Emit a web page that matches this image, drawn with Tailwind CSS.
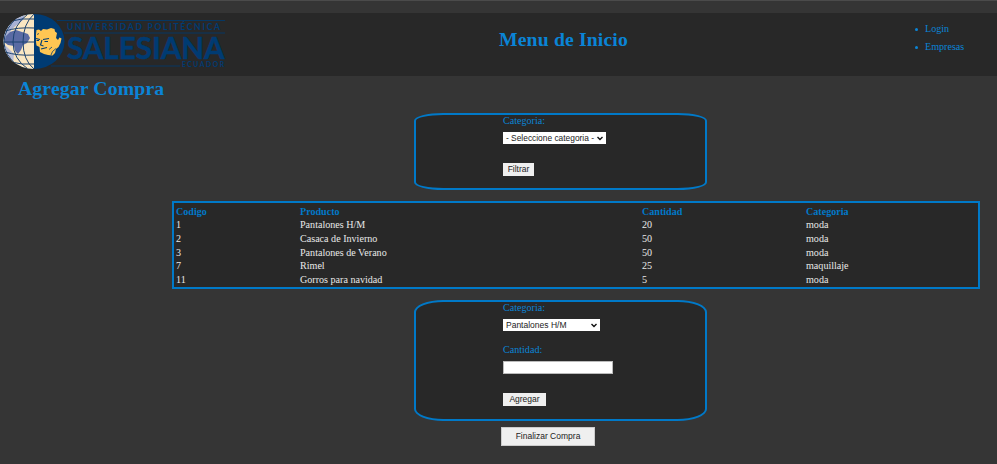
<!DOCTYPE html>
<html lang="es">
<head>
<meta charset="utf-8">
<title>Agregar Compra</title>
<script src="https://cdn.jsdelivr.net/npm/@tailwindcss/browser@4"></script>
</head>
<body class="w-[997px] h-[464px] overflow-hidden bg-[#353535] border-t border-[#4b4b4b] font-['Liberation_Serif',serif] text-[10.1px] leading-[14px] text-[#0a84d6]">
<header class="mt-[12px] h-[63px] bg-[#282828] flex items-start">
  <svg class="w-[230px] h-[63px] shrink-0" viewBox="0 13 230 63" aria-label="Universidad Politécnica Salesiana">
    <defs><clipPath id="globe"><path d="M34 14A30.500 27.500 0 0 0 34 69Z"/></clipPath></defs>
    <ellipse cx="34" cy="41.500" rx="30.500" ry="27.500" fill="#003b73"/>
    <g clip-path="url(#globe)">
      <rect x="3" y="13" width="31" height="57" fill="#fae6c2"/>
      <path d="M3 32L10 20L18 16L25 14L23 20L18 24L12 29L7 37L3 42Z" fill="#a9b2d5"/>
      <path d="M4 44L9 49L14 54L13 64L6 57Z" fill="#b9bdd7"/>
      <path d="M6 36L10 32L16 30L22 32L28 34L30 38L27 43L23 45L21 50L18 54L15 51L14 46L8 45L4 42Z" fill="#5a6ba4"/>
      <g fill="none" stroke="#1d426f" stroke-width="1">
        <path d="M3 42H34M5 31Q18 27 34 28M12 21Q21 18 34 19M5 52Q18 56 34 55M11 62Q22 65 34 64"/>
        <path d="M34 14Q23 24 23 42T34 69M28 14Q13 25 13 42T28 69M18 17Q4 29 4 42T18 66"/>
      </g>
    </g>
    <path d="M36 34L36.500 30L39 29.500L41 31L43 29L47 29.500L51 28L54.500 29L55 31.500L57 33L56 38L58 40L59.500 37.500L61.500 38.500L60.500 43L58.500 47L56 49L55 53L52.500 55.500L48 55L44 54L40 52L39.500 47L36.500 45.500L36 42Z" fill="#ffc653"/>
    <g fill="none" stroke="#003b73" stroke-width="1.100">
      <path d="M36 38.500L40 39.500M36.500 40.500H39M43 39.500L49 38.500M44.500 41.500H48M42 40L40.500 45L43.500 46M41 49L47 47.500"/>
      <path d="M49 49.500L52 47M51 55L52.500 51.500L56 48.500M37 34.500L39 33.500" stroke-width=".8"/>
    </g>
    <g stroke="#063762" stroke-width="1.200"><path d="M57 20.500H225M64 33H225M51 66H180"/></g>
    <g fill="#003b73" font-family="Lato, sans-serif" font-weight="700">
      <text x="67" y="30.300" font-size="8.600" textLength="153">UNIVERSIDAD POLITÉCNICA</text>
      <text x="67" y="59.300" font-size="30.500" textLength="157.500" lengthAdjust="spacingAndGlyphs" stroke="#003b73" stroke-width=".5">SALESIANA</text>
      <text x="182" y="67.200" font-size="6.800" textLength="42">ECUADOR</text>
    </g>
  </svg>
  <h1 class="ml-[269px] mt-[13px] w-[140px] whitespace-nowrap text-[19.7px] leading-[27px] font-bold tracking-[0.15px]">Menu de Inicio</h1>
  <nav class="ml-auto w-[82px] pt-[7px]">
    <ul class="leading-[18px]">
      <li class="flex items-center gap-[7px]"><span class="size-[3px] rounded-full bg-[#0a84d6]"></span>Login</li>
      <li class="flex items-center gap-[7px]"><span class="size-[3px] rounded-full bg-[#0a84d6]"></span>Empresas</li>
    </ul>
  </nav>
</header>
<h2 class="pl-[18px] h-[37px] text-[19.7px] leading-[24px] font-bold tracking-[0.15px]">Agregar Compra</h2>
<main>
  <form class="ml-[414px] w-[293px] h-[77px] bg-[#282828] border-2 border-[#0079c8] rounded-[10%] pl-[87px] flex flex-col items-start">
    <label class="mt-[-1px] h-[18px]">Categoria:</label>
    <div class="w-[103px] h-[12px] bg-white text-[#222] font-['Liberation_Sans',sans-serif] text-[8.4px] leading-[12px] flex items-center pl-[3px] whitespace-nowrap"><span>- Seleccione categoria -</span><svg class="ml-auto mr-[3px] w-[6px] h-[5px]" viewBox="0 0 6 5"><path d="M.5 1L3 3.500L5.500 1" fill="none" stroke="#111" stroke-width="1.400"/></svg></div>
    <button type="button" class="mt-[19px] w-[31px] h-[13px] bg-[#efefef] text-[#222] font-['Liberation_Sans',sans-serif] text-[8.5px] leading-[13px]">Filtrar</button>
  </form>
  <table class="mt-[11px] ml-[172px] w-[808px] h-[88px] bg-[#282828] border-2 border-[#0079c8] border-separate border-spacing-0 table-fixed text-left leading-[13.7px] text-[#e9e9e9]">
    <colgroup><col class="w-[126px]"><col class="w-[342px]"><col class="w-[164px]"><col></colgroup>
    <thead class="text-[#0079c8]"><tr><th class="pl-[2px] pt-[1.5px]">Codigo</th><th class="pt-[1.5px]">Producto</th><th class="pt-[1.5px]">Cantidad</th><th class="pt-[1.5px]">Categoria</th></tr></thead>
    <tbody>
      <tr><td class="pl-[2px]">1</td><td>Pantalones H/M</td><td>20</td><td>moda</td></tr>
      <tr><td class="pl-[2px]">2</td><td>Casaca de Invierno</td><td>50</td><td>moda</td></tr>
      <tr><td class="pl-[2px]">3</td><td>Pantalones de Verano</td><td>50</td><td>moda</td></tr>
      <tr><td class="pl-[2px]">7</td><td>Rimel</td><td>25</td><td>maquillaje</td></tr>
      <tr><td class="pl-[2px]">11</td><td>Gorros para navidad</td><td>5</td><td>moda</td></tr>
    </tbody>
  </table>
  <form class="mt-[11px] ml-[414px] w-[293px] h-[121px] bg-[#282828] border-2 border-[#0079c8] rounded-[10%] pl-[87px] flex flex-col items-start">
    <label class="mt-[-1px] h-[18px]">Categoria:</label>
    <div class="w-[97px] h-[12px] bg-white text-[#222] font-['Liberation_Sans',sans-serif] text-[8.5px] leading-[12px] flex items-center pl-[3px] whitespace-nowrap"><span>Pantalones H/M</span><svg class="ml-auto mr-[3px] w-[6px] h-[5px]" viewBox="0 0 6 5"><path d="M.5 1L3 3.500L5.500 1" fill="none" stroke="#111" stroke-width="1.400"/></svg></div>
    <label class="mt-[12px] h-[18px]">Cantidad:</label>
    <input aria-label="Cantidad" class="w-[110px] h-[13px] bg-white border border-[#bbb]">
    <button type="button" class="mt-[19px] w-[43px] h-[13px] bg-[#efefef] text-[#222] font-['Liberation_Sans',sans-serif] text-[8.5px] leading-[13px]">Agregar</button>
  </form>
  <button type="button" class="block mt-[6px] ml-[501px] w-[94px] h-[19px] bg-[#efefef] border border-[#ccc] text-[#222] font-['Liberation_Sans',sans-serif] text-[8.5px] leading-[17px]">Finalizar Compra</button>
</main>
</body>
</html>
